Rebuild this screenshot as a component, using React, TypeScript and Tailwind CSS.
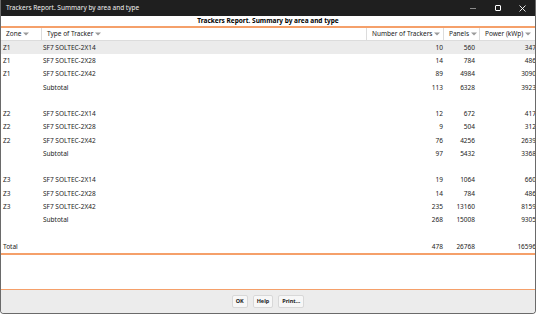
import React from 'react';

const font = { fontFamily: '"Noto Sans", "Open Sans", sans-serif' };

type Row = { zone: string; type: string; n: string; panels: string; power: string; hl?: boolean };

const rows: Row[] = [
  { zone: 'Z1', type: 'SF7 SOLTEC-2X14', n: '10', panels: '560', power: '347', hl: true },
  { zone: 'Z1', type: 'SF7 SOLTEC-2X28', n: '14', panels: '784', power: '486' },
  { zone: 'Z1', type: 'SF7 SOLTEC-2X42', n: '89', panels: '4984', power: '3090' },
  { zone: '', type: 'Subtotal', n: '113', panels: '6328', power: '3923' },
  { zone: '', type: '', n: '', panels: '', power: '' },
  { zone: 'Z2', type: 'SF7 SOLTEC-2X14', n: '12', panels: '672', power: '417' },
  { zone: 'Z2', type: 'SF7 SOLTEC-2X28', n: '9', panels: '504', power: '312' },
  { zone: 'Z2', type: 'SF7 SOLTEC-2X42', n: '76', panels: '4256', power: '2639' },
  { zone: '', type: 'Subtotal', n: '97', panels: '5432', power: '3368' },
  { zone: '', type: '', n: '', panels: '', power: '' },
  { zone: 'Z3', type: 'SF7 SOLTEC-2X14', n: '19', panels: '1064', power: '660' },
  { zone: 'Z3', type: 'SF7 SOLTEC-2X28', n: '14', panels: '784', power: '486' },
  { zone: 'Z3', type: 'SF7 SOLTEC-2X42', n: '235', panels: '13160', power: '8159' },
  { zone: '', type: 'Subtotal', n: '268', panels: '15008', power: '9305' },
  { zone: '', type: '', n: '', panels: '', power: '' },
  { zone: 'Total', type: '', n: '478', panels: '26768', power: '16596' },
];

const cols = 'grid grid-cols-[41px_325px_77px_36px_57px]';

const Arrow = () => (
  <svg width="6" height="4" viewBox="0 0 6 4" className="ml-[2px] shrink-0">
    <path d="M0 0.5 H6 L3 3.5 Z" fill="#9a9a9a" />
  </svg>
);

const Head = ({ label, last }: { label: string; last?: boolean }) => (
  <div className={`flex items-center pl-[5px] overflow-hidden ${last ? '' : 'border-r border-[#dcdcdc]'}`}>
    <span className="whitespace-nowrap">{label}</span>
    <Arrow />
  </div>
);

const Btn = ({ label }: { label: string }) => (
  <button className="h-[13px] px-[3px] min-w-[12px] bg-[#f7f7f7] border border-[#d8d8d8] rounded-[2px] text-[5.5px] font-bold text-[#222] leading-none">
    {label}
  </button>
);

export default function App() {
  return (
    <div
      className="w-[536px] h-[314px] bg-white flex flex-col overflow-hidden border-x border-b border-[#6a6a6a] rounded-b-[4px] text-[#222]"
      style={font}
    >
      <div className="h-[16px] bg-[#1f1f1f] flex items-center text-[#f0f0f0] text-[6.5px] pl-[5px] shrink-0">
        <span className="flex-1">Trackers Report. Summary by area and type</span>
        <div className="flex items-center h-full">
          <div className="w-[25px] flex justify-center">
            <div className="w-[6px] h-[1px] bg-[#8a8a8a]" />
          </div>
          <div className="w-[25px] flex justify-center">
            <div className="w-[6px] h-[6px] border border-white rounded-[1px]" />
          </div>
          <div className="w-[25px] flex justify-center">
            <svg width="7" height="7" viewBox="0 0 7 7">
              <path d="M0.5 0.5 L6.5 6.5 M6.5 0.5 L0.5 6.5" stroke="white" strokeWidth="0.9" />
            </svg>
          </div>
        </div>
      </div>

      <div className="h-[10px] flex items-center justify-center text-[6.5px] font-bold text-black shrink-0">
        Trackers Report. Summary by area and type
      </div>
      <div className="h-[1.5px] bg-[#f5a06a] shrink-0" />

      <div className={`${cols} h-[13.5px] text-[6.5px] border-b border-[#dcdcdc] shrink-0`}>
        <Head label="Zone" />
        <Head label="Type of Tracker" />
        <Head label="Number of Trackers" />
        <Head label="Panels" />
        <Head label="Power (kWp)" last />
      </div>

      <div className="flex flex-col text-[6.5px] shrink-0">
        {rows.map((r, i) => (
          <div key={i} className={`${cols} h-[13.27px] items-center ${r.hl ? 'bg-[#ebebeb]' : ''}`}>
            <div className="pl-[2px]">{r.zone}</div>
            <div className="pl-[1px] whitespace-nowrap">{r.type}</div>
            <div className="text-right pr-[1px]">{r.n}</div>
            <div className="text-right pr-[5px]">{r.panels}</div>
            <div className="text-right pr-[1px] whitespace-nowrap">{r.power}</div>
          </div>
        ))}
      </div>

      <div className="h-[1.5px] bg-[#f5a06a] shrink-0" />
      <div className="flex-1 bg-white" />
      <div className="h-[1.5px] bg-[#f5a06a] shrink-0" />
      <div className="h-[23px] bg-[#ececec] flex items-center justify-center gap-[5px] shrink-0">
        <Btn label="OK" />
        <Btn label="Help" />
        <Btn label="Print..." />
      </div>
    </div>
  );
}
